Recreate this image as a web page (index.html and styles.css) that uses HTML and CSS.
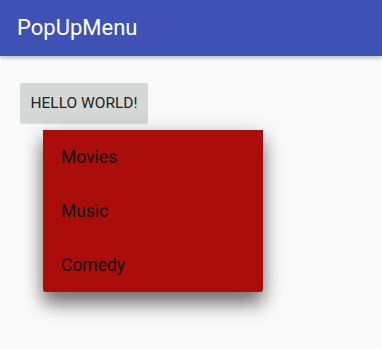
FILE: index.html
```html
<!DOCTYPE html>
<html lang="en">
<head>
<meta charset="utf-8">
<title>PopUpMenu</title>
<meta name="viewport" content="width=device-width,initial-scale=1">
<link rel="stylesheet" href="styles.css">
</head>
<body>
<header class="appbar">PopUpMenu</header>
<main class="content">
  <button class="btn">HELLO WORLD!</button>
  <ul class="popup">
    <li>Movies</li>
    <li>Music</li>
    <li>Comedy</li>
  </ul>
</main>
</body>
</html>
```

FILE: styles.css
```css
body{margin:0;background:#fafafa;font-family:Roboto,"Noto Sans",sans-serif;height:349px;overflow:hidden}
.appbar{height:56px;background:#3f51b5;color:#fff;font-size:22px;line-height:56px;padding-left:17px;box-shadow:0 2px 4px rgba(0,0,0,.25);position:relative}
.content{position:relative;padding:27px 0 0 20px}
.btn{display:block;width:128px;height:40px;margin:0;border:0;border-radius:2px;background:#d6d7d7;color:#222;font:15.5px Roboto,sans-serif;padding:0;box-shadow:0 1px 1px rgba(0,0,0,.1)}
.popup{position:absolute;left:43px;top:74px;width:220px;margin:0;padding:0;list-style:none;background:#ab0e0a;border-radius:0 0 3px 3px;box-shadow:0 12px 18px rgba(0,0,0,.5),0 2px 22px rgba(0,0,0,.15)}
.popup li{height:54px;line-height:54px;padding-left:18px;font-size:17.5px;color:#111}
```
